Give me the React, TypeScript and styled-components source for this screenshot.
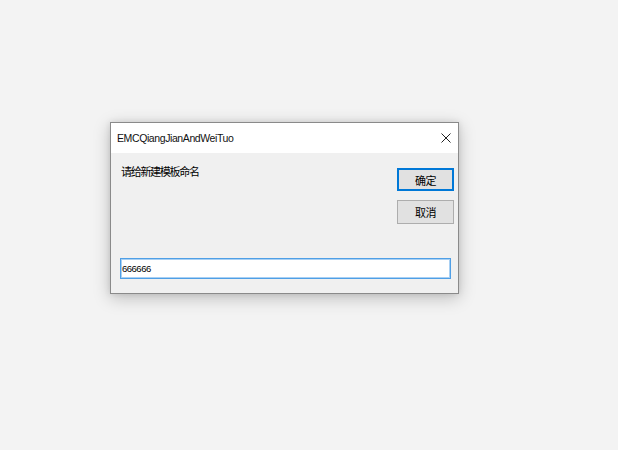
import React from "react";
import styled, { createGlobalStyle } from "styled-components";

const GlobalStyle = createGlobalStyle`
  html, body {
    margin: 0;
    padding: 0;
    background: #f3f3f3;
    font-family: "Liberation Sans", "Noto Sans CJK SC", sans-serif;
  }
  * { box-sizing: border-box; }
`;

const Desktop = styled.div`
  width: 618px;
  height: 450px;
  padding: 122px 0 0 110px;
  background: #f3f3f3;
`;

const Dialog = styled.div`
  width: 349px;
  height: 172px;
  display: flex;
  flex-direction: column;
  background: #f0f0f0;
  border: 1px solid #8a8a8a;
  box-shadow: 0 4px 16px rgba(0, 0, 0, 0.22), 0 0 6px rgba(0, 0, 0, 0.1);
`;

const TitleBar = styled.div`
  height: 30px;
  display: flex;
  align-items: center;
  justify-content: space-between;
  background: #ffffff;
  padding-left: 6px;
`;

const Title = styled.span`
  font-size: 10.5px;
  letter-spacing: -0.4px;
  color: #111;
`;

const CloseButton = styled.div`
  width: 24px;
  height: 30px;
  display: flex;
  align-items: center;
  justify-content: center;
`;

const Body = styled.div`
  flex: 1;
  display: flex;
  flex-direction: column;
  padding: 8px 4px 14px 9px;
`;

const TopRow = styled.div`
  display: flex;
  justify-content: space-between;
  align-items: flex-start;
`;

const Prompt = styled.div`
  margin-top: 3px;
  font-family: "Noto Sans CJK SC", sans-serif;
  font-size: 11px;
  line-height: 14px;
  letter-spacing: -1.3px;
  color: #000;
  padding-left: 1px;
`;

const ButtonColumn = styled.div`
  display: flex;
  flex-direction: column;
  gap: 9px;
  margin-top: 7px;
`;

const DialogButton = styled.button<{ $primary?: boolean }>`
  width: 57px;
  height: ${(p) => (p.$primary ? "23px" : "24px")};
  padding: 0;
  background: #e1e1e1;
  border: ${(p) => (p.$primary ? "2px solid #0078d7" : "1px solid #adadad")};
  font-family: "Noto Sans CJK SC", sans-serif;
  font-size: 11px;
  letter-spacing: -0.5px;
  color: #000;
`;

const NameInput = styled.input`
  margin-top: auto;
  width: 331px;
  height: 21px;
  padding: 0 0 0 1px;
  border: 1px solid #4f9fe6;
  box-shadow: inset 0 0 0 1px #a9d0f3;
  background: #fff;
  font-family: "Liberation Sans", sans-serif;
  font-size: 9.5px;
  letter-spacing: -0.5px;
  color: #000;
  outline: none;
`;

export default function App() {
  return (
    <>
      <GlobalStyle />
      <Desktop>
        <Dialog>
          <TitleBar>
            <Title>EMCQiangJianAndWeiTuo</Title>
            <CloseButton>
              <svg width="10" height="10" viewBox="0 0 10 10">
                <path d="M0.5 0.5 L9.5 9.5 M9.5 0.5 L0.5 9.5" stroke="#222" strokeWidth="1" fill="none" />
              </svg>
            </CloseButton>
          </TitleBar>
          <Body>
            <TopRow>
              <Prompt>请给新建模板命名</Prompt>
              <ButtonColumn>
                <DialogButton $primary>确定</DialogButton>
                <DialogButton>取消</DialogButton>
              </ButtonColumn>
            </TopRow>
            <NameInput defaultValue="666666" />
          </Body>
        </Dialog>
      </Desktop>
    </>
  );
}
